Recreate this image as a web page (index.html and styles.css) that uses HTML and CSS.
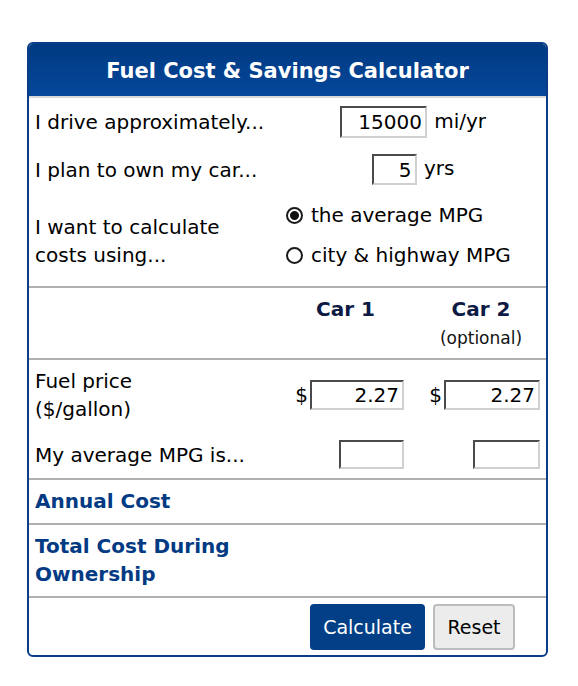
FILE: index.html
```html
<!DOCTYPE html>
<html>
<head>
<title>Fuel Cost &amp; Savings Calculator</title>
<link rel="stylesheet" href="styles.css">
</head>
<body>
<div class="calc">
  <div class="calc-head">Fuel Cost &amp; Savings Calculator</div>

  <div class="section settings">
    <div class="row">
      <div class="label">I drive approximately...</div>
      <div class="field">
        <input type="text" class="num miles" value="15000"> <span class="unit">mi/yr</span>
      </div>
    </div>
    <div class="row">
      <div class="label">I plan to own my car...</div>
      <div class="field">
        <input type="text" class="num years" value="5"> <span class="unit">yrs</span>
      </div>
    </div>
    <div class="row radio-row">
      <div class="label">I want to calculate<br>costs using...</div>
      <div class="radios">
        <label class="radio"><input type="radio" name="mode" checked> the average MPG</label>
        <label class="radio"><input type="radio" name="mode"> city &amp; highway MPG</label>
      </div>
    </div>
  </div>

  <div class="section cars">
    <div class="car-row">
      <div></div>
      <div class="car-head">Car 1</div>
      <div class="car-head">Car 2<span class="optional">(optional)</span></div>
    </div>
  </div>

  <div class="section fuel">
    <div class="car-row">
      <div class="label">Fuel price<br>($/gallon)</div>
      <div class="cell"><span class="dollar">$</span><input type="text" class="num price" value="2.27"></div>
      <div class="cell last"><span class="dollar">$</span><input type="text" class="num price wide" value="2.27"></div>
    </div>
    <div class="car-row">
      <div class="label">My average MPG is...</div>
      <div class="cell"><input type="text" class="num mpg"></div>
      <div class="cell last"><input type="text" class="num mpg wide"></div>
    </div>
  </div>

  <div class="section result">
    <div class="result-label">Annual Cost</div>
  </div>

  <div class="section result">
    <div class="result-label">Total Cost During<br>Ownership</div>
  </div>

  <div class="buttons">
    <button class="btn primary">Calculate</button>
    <button class="btn">Reset</button>
  </div>
</div>
</body>
</html>
```

FILE: styles.css
```css
body {
  margin: 0;
  padding: 42px 0 0 27px;
  font-family: "DejaVu Sans", Verdana, sans-serif;
  font-size: 20px;
  color: #000;
}
.calc {
  width: 517px;
  border: 2px solid #0a3d87;
  border-radius: 6px;
  overflow: hidden;
}
.calc-head {
  height: 52px;
  line-height: 54px;
  background: linear-gradient(#003a82, #06479a);
  color: #fff;
  font-weight: bold;
  font-size: 21px;
  text-align: center;
  border-bottom: 2px solid #d9d9d9;
}
.section {
  border-bottom: 2px solid #b0b0b0;
}
.label {
  padding-left: 6px;
  line-height: 28px;
}

/* settings */
.settings {
  display: flex;
  flex-direction: column;
  gap: 16px;
  padding: 8px 0 17px;
}
.row {
  display: grid;
  grid-template-columns: 251px 1fr;
  align-items: center;
}
.field {
  text-align: center;
}
.unit {
  margin-left: 1px;
}
.num {
  box-sizing: border-box;
  font-family: inherit;
  font-size: 20px;
  text-align: right;
  padding: 0 3px 0 4px;
  margin: 0;
  background: #fff;
  border: 2px solid;
  border-color: #4a4a4a #d0d0d0 #d0d0d0 #4a4a4a;
  vertical-align: middle;
}
.miles { width: 87px; height: 32px; }
.years { width: 45px; height: 31px; }
.radio-row .label {
  align-self: end;
}
.radios {
  display: flex;
  flex-direction: column;
  gap: 12px;
  padding-left: 6px;
}
.radio {
  display: flex;
  align-items: center;
  gap: 8px;
  line-height: 28px;
}
.radio input {
  appearance: none;
  margin: 0;
  width: 17px;
  height: 17px;
  border: 2px solid #1a1a1a;
  border-radius: 50%;
  box-sizing: border-box;
  background: #fff;
}
.radio input:checked {
  background: radial-gradient(circle, #111 0 4px, #fff 5px);
}

/* car columns */
.car-row {
  display: grid;
  grid-template-columns: 251px 131px 1fr;
  align-items: center;
}
.cars {
  padding: 7px 0 9px;
}
.cars .car-row {
  align-items: start;
}
.car-head {
  text-align: center;
  font-weight: bold;
  color: #0c1a44;
  line-height: 28px;
}
.car-head:last-child {
  padding-left: 5px;
}
.optional {
  display: block;
  font-weight: normal;
  color: #111;
  font-size: 17px;
  line-height: 22px;
  margin-top: 4px;
}
.fuel {
  display: flex;
  flex-direction: column;
  gap: 17px;
  padding: 7px 0 9px;
}
.cell {
  display: flex;
  justify-content: flex-end;
  align-items: center;
  padding-right: 7px;
}
.cell.last {
  padding-right: 6px;
}
.dollar {
  margin-right: 2px;
}
.price { width: 94px; height: 30px; }
.price.wide { width: 96px; }
.mpg { width: 65px; height: 29px; }
.mpg.wide { width: 67px; }

/* results */
.result {
  padding: 7px 6px 8px;
}
.result-label {
  font-weight: bold;
  color: #033a84;
  line-height: 28px;
}

/* buttons */
.buttons {
  display: flex;
  justify-content: flex-end;
  gap: 8px;
  padding: 6px 31px 5px 0;
}
.btn {
  font-family: inherit;
  font-size: 19px;
  height: 46px;
  border-radius: 4px;
  border: 2px solid #bcbcbc;
  background: #ececec;
  color: #000;
  padding: 0;
  width: 82px;
}
.btn.primary {
  width: 115px;
  border: none;
  background: #023f86;
  color: #fff;
}
```
